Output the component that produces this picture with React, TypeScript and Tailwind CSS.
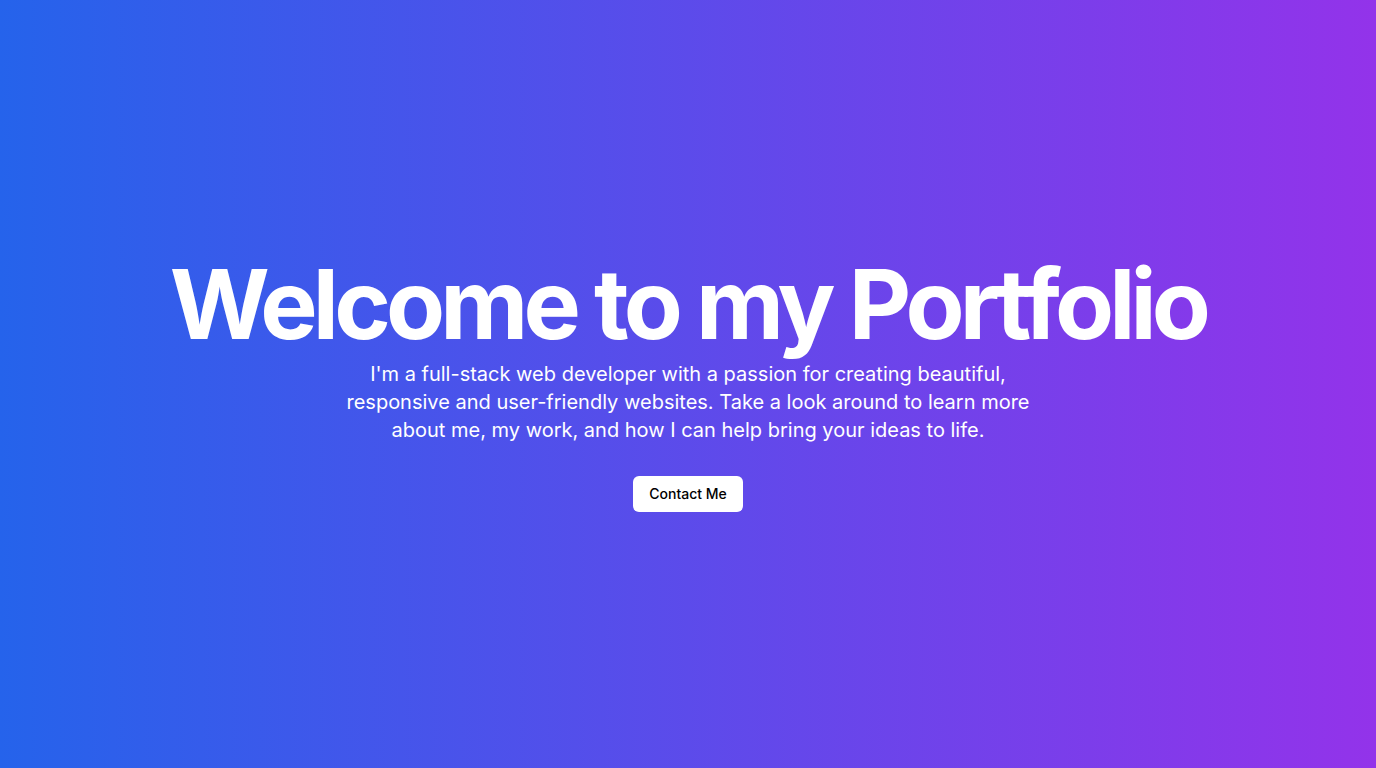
export default function App() {
  return (
    <main
      className="min-h-screen w-full flex flex-col items-center justify-center bg-[linear-gradient(to_right,#2563eb,#9333ea)] text-white px-4"
      style={{ fontFamily: 'Inter, "Noto Sans", sans-serif' }}
    >
      {/* Hero */}
      <h1 className="text-[96.4px] font-bold tracking-tighter leading-none text-center">
        Welcome to my Portfolio
      </h1>
      <p className="mt-2 max-w-[700px] text-xl leading-7 text-center">
        I'm a full-stack web developer with a passion for creating beautiful,
        responsive and user-friendly websites. Take a look around to learn more
        about me, my work, and how I can help bring your ideas to life.
      </p>
      <button className="mt-8 h-9 px-4 rounded-md bg-white text-black text-sm font-medium">
        Contact Me
      </button>
    </main>
  );
}
